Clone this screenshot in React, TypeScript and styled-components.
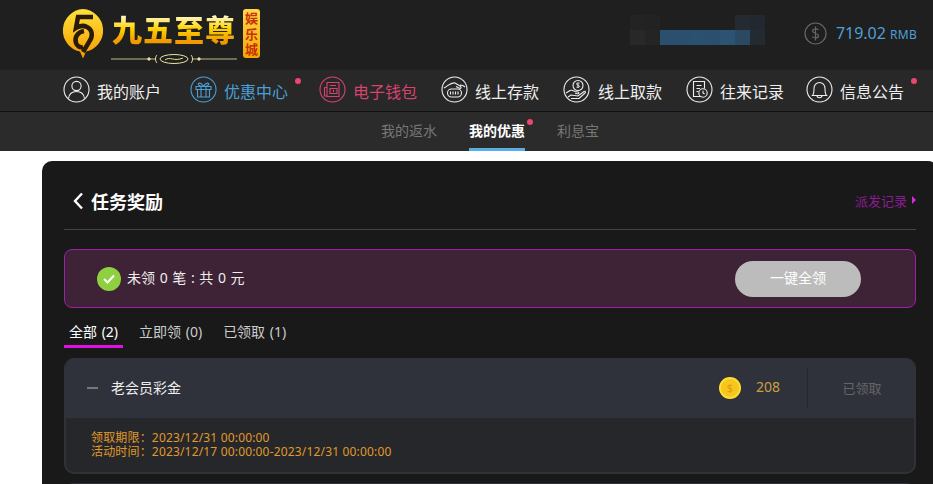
import { ReactNode } from "react";
import styled, { createGlobalStyle } from "styled-components";

const FONT = `"Noto Sans", "Noto Sans CJK SC", sans-serif`;

const GlobalStyle = createGlobalStyle`
  html, body {
    margin: 0;
    padding: 0;
    height: 484px;
    overflow: hidden;
    background: #fff;
    font-family: ${FONT};
  }
  * { box-sizing: border-box; }
`;

const Round = ({ color, children }: { color: string; children: ReactNode }) => (
  <svg width="27" height="27" viewBox="0 0 27 27" fill="none" stroke={color} strokeWidth="1.1">
    <circle cx="13.5" cy="13.5" r="12.5" />
    {children}
  </svg>
);

const UserIcon = () => (
  <Round color="#eee">
    <circle cx="13.5" cy="10" r="4.6" />
    <path d="M5.5 22.5c.6-4.600 3.600-7 8-7s7.400 2.400 8 7" />
  </Round>
);
const GiftIcon = () => (
  <Round color="#4b9fd6">
    <path d="M6 10.500h15v3H6zM7.500 13.500V21h12v-7.500M11 10.500V21M16 10.500V21M13.500 10.500c-1.500-3-4-4-5-3s1 3 5 3c4 0 6-2 5-3s-3.500 0-5 3" />
  </Round>
);
const WalletIcon = () => (
  <Round color="#d8426f">
    <path d="M8 6.500h12v14H8zM5.500 11.500H8M5.500 11.500v8.500H8M11 9.500h6M11 12.500h7v5h-7z" />
    <path d="M14.500 13.800v2.500" />
  </Round>
);
const DepositIcon = () => (
  <Round color="#eee">
    <path d="M3 12c4-2 7-6 11-5l5 3c2 1 1 3-1 2l-3-1.500M24 11c-1-1-3-2-5-2" />
    <rect x="6.500" y="13" width="14" height="8" rx="4" />
    <path d="M9.500 15.500v3M12 15.500v3M14.500 15.500v3M17 15.500v3" />
  </Round>
);
const WithdrawIcon = () => (
  <Round color="#eee">
    <circle cx="15" cy="9.500" r="5" />
    <path d="M15 7v5M13.500 11c1 .8 3 .5 3-.7s-3-1-3-2.300 2-1.500 3-.7" strokeWidth="0.9" />
    <path d="M3 17l4-2.500c2-1 3 0 5 1l3 .5c1.500.5 1 2-.5 1.700l-2.500-.5M5 21l3-2 7 1 6-4.500c1.200-.7 2 .5 1 1.500l-6 5.500H8" />
  </Round>
);
const RecordIcon = () => (
  <Round color="#eee">
    <path d="M15.500 20.500H7.500v-15h11v7M10.500 9.500h5M10.500 12.500h3.500M10.500 15.500h2" />
    <circle cx="17" cy="17" r="4.200" />
    <path d="M17 14.800V17l1.600 1" />
  </Round>
);
const BellIcon = () => (
  <Round color="#eee">
    <path d="M6.500 19.500c1.500-1.500 1.500-3.500 1.500-7 0-3.500 2.500-6 5.500-6s5.500 2.500 5.500 6c0 3.500 0 5.500 1.500 7z" />
    <path d="M11 19.500c0 3 5 3 5 0" />
  </Round>
);

const LogoMark = () => (
  <svg width="50" height="52" viewBox="0 0 50 52">
    <defs>
      <linearGradient id="coin" x1="0" y1="0" x2="0" y2="1">
        <stop offset="0" stopColor="#ffe23a" />
        <stop offset="1" stopColor="#f59a00" />
      </linearGradient>
    </defs>
    <path d="M22 1a21.500 21.500 0 0 1 3 42.500l-3 7-3-7A21.500 21.500 0 0 1 22 1z" fill="url(#coin)" transform="translate(1 0)" />
    <path
      d="M33 9H18l-2 11c3-2 7-3 11-1 6 3 6 10 2 15l-6 10M24 23c-6 1-10 6-8 12 1 3 4 5 7 4"
      fill="none"
      stroke="#2a1a08"
      strokeWidth="4.500"
    />
  </svg>
);

const Ornament = () => (
  <svg width="126" height="12" viewBox="0 0 126 12" fill="none" stroke="#e9e2a0" strokeWidth="1">
    <path d="M0 6h44M82 6h44" strokeWidth="0.8" />
    <circle cx="38" cy="6" r="1.200" fill="#e9e2a0" />
    <circle cx="88" cy="6" r="1.200" fill="#e9e2a0" />
    <path d="M46 2c-2 2-2 6 0 8M80 2c2 2 2 6 0 8" />
    <ellipse cx="63" cy="6" rx="14" ry="4.500" />
    <path d="M54 7c5-4 9 2 18-2" />
  </svg>
);

const Header = styled.header`
  height: 70px;
  background: #1f1f1f;
  display: flex;
  align-items: flex-start;
  justify-content: space-between;
  padding: 8px 16px 0 60px;
`;
const Logo = styled.div`
  display: flex;
  align-items: flex-start;
`;
const LogoBody = styled.div`
  margin-left: 1px;
  width: 126px;
  padding-top: 4px;
  display: flex;
  flex-direction: column;
  align-items: center;
`;
const LogoName = styled.div`
  font-family: "Noto Sans CJK SC", sans-serif;
  font-size: 30px;
  font-weight: 900;
  line-height: 33px;
  letter-spacing: 1px;
  white-space: nowrap;
  background: linear-gradient(#fff8c8 12%, #ffd400 50%, #f09a00 88%);
  -webkit-background-clip: text;
  background-clip: text;
  color: transparent;
`;
const OrnamentRow = styled.div`
  margin-top: 3px;
  height: 12px;
`;
const LogoBadge = styled.div`
  width: 17px;
  height: 49px;
  margin: 1px 0 0 6px;
  border-radius: 3px;
  background: linear-gradient(#ffd84a, #f3a800);
  color: #c8300c;
  font-family: "Noto Sans CJK SC", sans-serif;
  font-size: 13px;
  font-weight: 700;
  line-height: 15.500px;
  text-align: center;
  padding-top: 1px;
`;
const HeaderRight = styled.div`
  display: flex;
  align-items: center;
  padding-top: 7px;
`;
const Mosaic = styled.div`
  display: grid;
  grid-template-columns: repeat(9, 15px);
  grid-auto-rows: 15px;
  margin-right: 39px;
`;
const MosaicCell = styled.div<{ $tone: string }>`
  background: ${(p) => p.$tone};
`;
const DollarIcon = styled.svg`
  margin-top: 6px;
`;
const Balance = styled.div`
  margin: 6px 0 0 9px;
  color: #4d9fd8;
  font-size: 16px;
  white-space: nowrap;
  small {
    font-size: 12px;
    margin-left: 4px;
    letter-spacing: 0.3px;
  }
`;

const Nav = styled.nav`
  height: 42px;
  background: #282828;
  border-bottom: 1px solid #111;
  display: flex;
  align-items: center;
  padding: 0 0 2px 63px;
`;
const NavItem = styled.a<{ $color: string; $trail: number; $gap?: number }>`
  position: relative;
  display: flex;
  align-items: center;
  gap: ${(p) => p.$gap ?? 7}px;
  margin-right: ${(p) => p.$trail}px;
  color: ${(p) => p.$color};
  font-size: 16px;
  white-space: nowrap;
`;
const NavLabel = styled.span`
  padding-top: 2px;
`;
const Dot = styled.i<{ $right: number; $top: number }>`
  position: absolute;
  right: ${(p) => p.$right}px;
  top: ${(p) => p.$top}px;
  width: 6px;
  height: 6px;
  border-radius: 50%;
  background: #f0456f;
`;

const SubNav = styled.div`
  height: 39px;
  background: #2b2b2b;
  display: flex;
  justify-content: center;
  gap: 32px;
  padding-left: 47px;
`;
const SubItem = styled.a<{ $active?: boolean }>`
  position: relative;
  height: 39px;
  line-height: 38px;
  font-size: 14px;
  font-weight: ${(p) => (p.$active ? 700 : 400)};
  color: ${(p) => (p.$active ? "#fff" : "#777")};
  border-bottom: 3px solid ${(p) => (p.$active ? "#5aaee6" : "transparent")};
`;

const Page = styled.main`
  padding: 10px 0 0 42px;
  width: 960px;
`;
const Card = styled.section`
  width: 896px;
  height: 323px;
  background: #191919;
  border-radius: 10px 10px 0 0;
  padding: 0 22px;
  overflow: hidden;
`;
const TitleRow = styled.div`
  height: 69px;
  border-bottom: 1px solid #444;
  display: flex;
  align-items: center;
  justify-content: space-between;
  padding: 12px 0 0 8px;
`;
const Title = styled.h1`
  margin: 0;
  display: flex;
  align-items: center;
  gap: 7px;
  color: #fff;
  font-size: 18px;
  font-weight: 700;
`;
const RecordLink = styled.a`
  display: flex;
  align-items: center;
  gap: 5px;
  color: #8c1b96;
  font-size: 13px;
  margin-bottom: 2px;
  &::after {
    content: "";
    border-left: 4px solid #d32bd8;
    border-top: 4px solid transparent;
    border-bottom: 4px solid transparent;
  }
`;
const Banner = styled.div`
  margin-top: 19px;
  height: 59px;
  background: #3e2235;
  border: 1px solid #a01fa8;
  border-radius: 8px;
  display: flex;
  align-items: center;
  justify-content: space-between;
  padding: 0 54px 0 32px;
`;
const BannerText = styled.div`
  display: flex;
  align-items: center;
  gap: 6px;
  color: #eee;
  font-size: 14px;
  word-spacing: 1px;
`;
const BannerLabel = styled.span`
  margin-bottom: 3px;
`;
const CheckBadge = styled.span`
  width: 24px;
  height: 24px;
  border-radius: 50%;
  background: #8ed03f;
  display: flex;
  align-items: center;
  justify-content: center;
`;
const ClaimButton = styled.button`
  width: 126px;
  height: 36px;
  border: 0;
  border-radius: 18px;
  padding: 0 0 3px;
  background: #bdbcbc;
  color: #fff;
  font-family: ${FONT};
  font-size: 14px;
`;
const Tabs = styled.div`
  margin-top: 12px;
  display: flex;
  gap: 11px;
`;
const Tab = styled.a<{ $active?: boolean }>`
  height: 28px;
  padding: 0 5px;
  line-height: 24px;
  font-size: 14px;
  word-spacing: 1px;
  white-space: nowrap;
  color: ${(p) => (p.$active ? "#fff" : "#ccc")};
  border-bottom: ${(p) => (p.$active ? "3px solid #e011e0" : "none")};
`;
const Item = styled.article`
  margin-top: 10px;
  border-radius: 10px;
  overflow: hidden;
  background: #26272b;
  border: 2px solid #313238;
  border-top: 0;
`;
const NextItem = styled(Item)`
  margin-top: 9px;
`;
const ItemHead = styled.div`
  height: 60px;
  margin: 0 -2px;
  background: #30323b;
  display: flex;
  align-items: center;
  color: #eee;
  font-size: 14px;
  padding-left: 23px;
`;
const Dash = styled.span`
  width: 11px;
  height: 2px;
  background: #777;
  margin-right: 13px;
`;
const ItemName = styled.span`
  flex: 1;
  padding-bottom: 2px;
`;
const Coin = styled.span`
  width: 22px;
  height: 22px;
  border-radius: 50%;
  background: #f6c61c;
  border: 2px solid #ffdd33;
  color: #e09a10;
  font-size: 11px;
  line-height: 18px;
  text-align: center;
`;
const Amount = styled.span`
  width: 66px;
  padding-left: 15px;
  color: #c9a040;
  font-size: 14px;
  margin-bottom: 3px;
`;
const Status = styled.span`
  width: 109px;
  height: 40px;
  border-left: 1px solid #26272b;
  color: #666;
  font-size: 13px;
  line-height: 42px;
  text-align: center;
  margin-bottom: 3px;
`;
const ItemBody = styled.div`
  height: 54px;
  padding: 13px 0 0 25px;
  color: #e09a2a;
  font-size: 12px;
  line-height: 14px;
  letter-spacing: 0.17px;
`;

const MOSAIC = [
  "#232323", "#222222", "#1f1f1f", "#1f1f1f", "#1f1f1f", "#1f1f1f", "#1f1f1f", "#232a30", "#232830",
  "#282828", "#242424", "#2b506f", "#2b506f", "#2b5170", "#2b506f", "#2c5374", "#2a4a64", "#232a30",
];

const navItems = [
  { label: "我的账户", icon: <UserIcon />, color: "#eee", trail: 29 },
  { label: "优惠中心", icon: <GiftIcon />, color: "#4b9fd6", trail: 31, dot: true },
  { label: "电子钱包", icon: <WalletIcon />, color: "#d8426f", trail: 24 },
  { label: "线上存款", icon: <DepositIcon />, color: "#eee", trail: 24 },
  { label: "线上取款", icon: <WithdrawIcon />, color: "#eee", trail: 24, gap: 8 },
  { label: "往来记录", icon: <RecordIcon />, color: "#eee", trail: 22 },
  { label: "信息公告", icon: <BellIcon />, color: "#eee", trail: 0, dot: true },
];

export default function App() {
  return (
    <>
      <GlobalStyle />
      <Header>
        <Logo>
          <LogoMark />
          <LogoBody>
            <LogoName>九五至尊</LogoName>
            <OrnamentRow>
              <Ornament />
            </OrnamentRow>
          </LogoBody>
          <LogoBadge>
            娱<br />乐<br />城
          </LogoBadge>
        </Logo>
        <HeaderRight>
          <Mosaic>
            {MOSAIC.map((tone, i) => (
              <MosaicCell key={i} $tone={tone} />
            ))}
          </Mosaic>
          <DollarIcon width="23" height="23" viewBox="0 0 23 23" fill="none" stroke="#666" strokeWidth="1.200">
            <circle cx="11.500" cy="11.500" r="10.500" />
            <path d="M14.500 8c-1-1.500-6-1.500-6 1s6 2 6 4.800-5 2.700-6.200.7M11.500 4.500v14" />
          </DollarIcon>
          <Balance>
            719.02<small>RMB</small>
          </Balance>
        </HeaderRight>
      </Header>
      <Nav>
        {navItems.map((n) => (
          <NavItem key={n.label} $color={n.color} $trail={n.trail} $gap={n.gap}>
            {n.icon}
            <NavLabel>{n.label}</NavLabel>
            {n.dot && <Dot $right={-13} $top={2} />}
          </NavItem>
        ))}
      </Nav>
      <SubNav>
        <SubItem>我的返水</SubItem>
        <SubItem $active>
          我的优惠
          <Dot $right={-8} $top={7} />
        </SubItem>
        <SubItem>利息宝</SubItem>
      </SubNav>
      <Page>
        <Card>
          <TitleRow>
            <Title>
              <svg width="12" height="18" viewBox="0 0 12 18" fill="none" stroke="#fff" strokeWidth="2.400">
                <path d="M10 1.500L3 9l7 7.500" />
              </svg>
              任务奖励
            </Title>
            <RecordLink>派发记录</RecordLink>
          </TitleRow>
          <Banner>
            <BannerText>
              <CheckBadge>
                <svg width="12" height="10" viewBox="0 0 12 10" fill="none" stroke="#fff" strokeWidth="2">
                  <path d="M1 5l3.500 3.500L11 1.500" />
                </svg>
              </CheckBadge>
              <BannerLabel>未领 0 笔 : 共 0 元</BannerLabel>
            </BannerText>
            <ClaimButton>一键全领</ClaimButton>
          </Banner>
          <Tabs>
            <Tab $active>全部 (2)</Tab>
            <Tab>立即领 (0)</Tab>
            <Tab>已领取 (1)</Tab>
          </Tabs>
          <Item>
            <ItemHead>
              <Dash />
              <ItemName>老会员彩金</ItemName>
              <Coin>$</Coin>
              <Amount>208</Amount>
              <Status>已领取</Status>
            </ItemHead>
            <ItemBody>
              领取期限：2023/12/31 00:00:00
              <br />
              活动时间：2023/12/17 00:00:00-2023/12/31 00:00:00
            </ItemBody>
          </Item>
          <NextItem>
            <ItemHead />
          </NextItem>
        </Card>
      </Page>
    </>
  );
}
